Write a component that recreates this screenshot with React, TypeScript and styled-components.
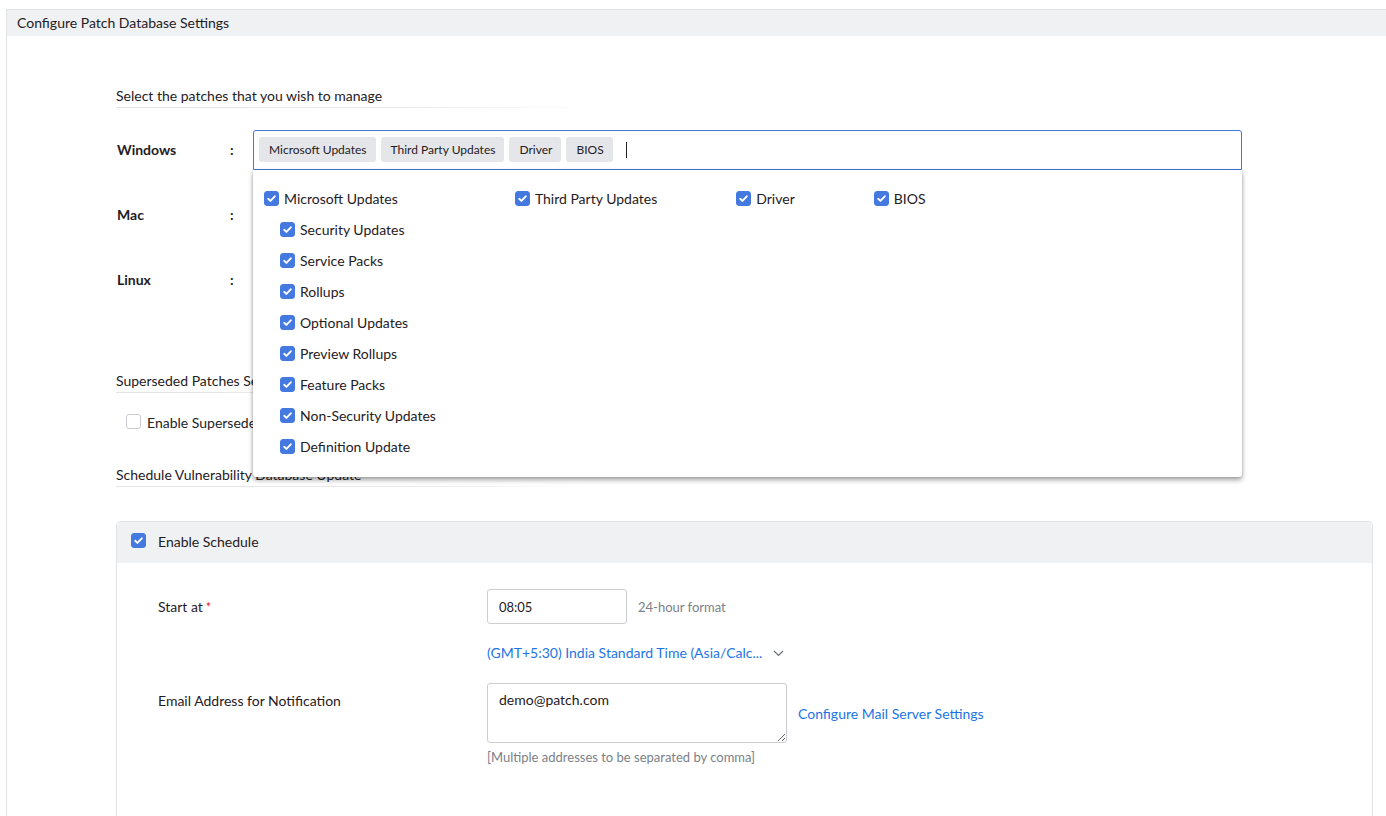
import React from "react";
import styled, { createGlobalStyle } from "styled-components";

const GlobalStyle = createGlobalStyle`
  html, body {
    margin: 0;
    padding: 0;
    background: #ffffff;
    font-family: Lato, "Open Sans", "Liberation Sans", sans-serif;
    color: #222326;
  }
  * { box-sizing: border-box; }
`;

// Outer frame
const Page = styled.div`
  padding: 9px 0 0 6px;
  min-height: 100vh;
`;

const Frame = styled.div`
  border-top: 1px solid #e2e3e7;
  border-left: 1px solid #e2e3e7;
  min-height: calc(100vh - 9px);
`;

const FrameHeader = styled.div`
  height: 26px;
  line-height: 26px;
  padding-left: 10px;
  background: #f0f1f3;
  font-size: 14px;
  color: #1f2024;
`;

const Content = styled.div`
  padding: 0 13px 0 109px;
`;

// Section titles with fading rule
const SectionTitle = styled.div<{ $top: number }>`
  margin-top: ${(p) => p.$top}px;
  font-size: 14px;
  line-height: 20px;
  width: 480px;
  color: #1f2024;
  background-image: linear-gradient(to right, #e3e4e8 0%, #e8e9ec 60%, rgba(255, 255, 255, 0) 100%);
  background-size: 100% 1px;
  background-position: bottom left;
  background-repeat: no-repeat;
  padding-bottom: 2px;
`;

// OS rows
const OsList = styled.div`
  margin-top: 22px;
  display: flex;
  flex-direction: column;
  gap: 25px;
`;

const OsRow = styled.div`
  display: flex;
  align-items: center;
`;

const OsLabel = styled.div`
  width: 114px;
  padding-left: 1px;
  font-size: 14px;
  font-weight: 700;
  color: #1f2024;
  margin-top: -2px;
`;

const Colon = styled.div`
  width: 23px;
  font-size: 14px;
  font-weight: 700;
  margin-top: -2px;
`;

const Field = styled.div`
  position: relative;
  width: 989px;
`;

const TagInput = styled.div<{ $active?: boolean }>`
  height: 40px;
  border: 1px solid ${(p) => (p.$active ? "#3f78de" : "#d3d5da")};
  border-radius: 3px 3px 0 0;
  display: flex;
  align-items: center;
  gap: 5px;
  padding: 0 5px 1px;
  background: #fff;
`;

const Chip = styled.span`
  height: 25px;
  line-height: 25px;
  padding: 0 9px 0 10px;
  border-radius: 3px;
  background: #e5e6ea;
  font-size: 12px;
  color: #1f2024;
`;

const Caret = styled.span`
  width: 1px;
  height: 16px;
  margin-left: 8px;
  background: #222;
`;

// Dropdown menu overlaying the form
const Menu = styled.div`
  position: absolute;
  top: 100%;
  left: 0;
  right: 0;
  z-index: 5;
  background: #fff;
  padding: 13px 11px 15px;
  display: flex;
  gap: 79px;
  box-shadow: 0 3px 5px rgba(0, 0, 0, 0.36), 0 0 2px rgba(0, 0, 0, 0.22);
  border-radius: 0 0 3px 3px;
`;

const MenuColumn = styled.div`
  display: flex;
  flex-direction: column;
`;

const MenuItem = styled.label<{ $sub?: boolean }>`
  display: flex;
  align-items: center;
  gap: 5px;
  height: 31px;
  padding-left: ${(p) => (p.$sub ? 16 : 0)}px;
  font-size: 14px;
  color: #1f2024;
  white-space: nowrap;
`;

const Box = styled.span<{ $on: boolean }>`
  width: 15px;
  height: 15px;
  flex: none;
  border-radius: 3px;
  margin-top: -1px;
  background: ${(p) => (p.$on ? "#4479e0" : "#fff")};
  border: 1px solid ${(p) => (p.$on ? "#4479e0" : "#c9cbd1")};
  display: flex;
  align-items: center;
  justify-content: center;
`;

const CheckRow = styled.div`
  margin-top: 19px;
  padding-left: 10px;
  display: flex;
  align-items: center;
  gap: 6px;
  height: 20px;
  font-size: 14px;
`;

// Schedule panel
const Panel = styled.div`
  margin-top: 34px;
  border: 1px solid #e2e3e7;
  border-bottom: none;
  border-radius: 5px 5px 0 0;
`;

const PanelHeader = styled.div`
  height: 41px;
  background: #f0f1f3;
  border-radius: 5px 5px 0 0;
  display: flex;
  align-items: center;
  gap: 12px;
  padding: 0 0 3px 14px;
  font-size: 14px;
  color: #1f2024;
`;

const PanelBody = styled.div`
  padding: 26px 0 80px 41px;
  display: flex;
  flex-direction: column;
`;

const FormRow = styled.div<{ $gap: number }>`
  display: flex;
  margin-top: ${(p) => p.$gap}px;
`;

const FormLabel = styled.div`
  width: 329px;
  padding-top: 8px;
  font-size: 14px;
  line-height: 20px;
  color: #1f2024;
`;

const Required = styled.span`
  color: #e0262b;
  margin-left: 3px;
  vertical-align: top;
  font-size: 13px;
`;

const FormValue = styled.div`
  display: flex;
  flex-direction: column;
`;

const Inline = styled.div`
  display: flex;
  align-items: center;
  gap: 11px;
`;

const TimeInput = styled.input`
  width: 140px;
  height: 35px;
  border: 1px solid #ccced4;
  border-radius: 3px;
  padding: 0 11px;
  font-family: inherit;
  font-size: 13px;
  color: #1f2024;
  outline: none;
`;

const Hint = styled.span<{ $top?: number }>`
  font-size: 13px;
  color: #7b7f89;
  line-height: 18px;
  margin-top: ${(p) => p.$top ?? 0}px;
`;

const Link = styled.a<{ $drop?: number }>`
  font-size: 14px;
  color: #1d74e6;
  text-decoration: none;
  line-height: 20px;
  cursor: pointer;
  margin-top: ${(p) => p.$drop ?? 0}px;
`;

const ZoneRow = styled.div`
  display: flex;
  align-items: center;
  gap: 11px;
  margin-top: 19px;
  height: 20px;
`;

const MailArea = styled.textarea`
  width: 300px;
  height: 60px;
  border: 1px solid #ccced4;
  border-radius: 3px;
  padding: 7px 11px;
  font-family: inherit;
  font-size: 14px;
  color: #1f2024;
  outline: none;
  resize: both;
`;

function Check({ on }: { on: boolean }) {
  return (
    <Box $on={on}>
      {on && (
        <svg width="11" height="11" viewBox="0 0 11 11">
          <path d="M2.2 5.8 L4.4 7.9 L8.8 3.3" fill="none" stroke="#fff" strokeWidth="1.9" strokeLinecap="round" strokeLinejoin="round" />
        </svg>
      )}
    </Box>
  );
}

const microsoftSubs = [
  "Security Updates",
  "Service Packs",
  "Rollups",
  "Optional Updates",
  "Preview Rollups",
  "Feature Packs",
  "Non-Security Updates",
  "Definition Update",
];

const chips = ["Microsoft Updates", "Third Party Updates", "Driver", "BIOS"];

export default function App() {
  return (
    <>
      <GlobalStyle />
      <Page>
        <Frame>
          <FrameHeader>Configure Patch Database Settings</FrameHeader>
          <Content>
            <SectionTitle $top={50}>Select the patches that you wish to manage</SectionTitle>

            <OsList>
              <OsRow>
                <OsLabel>Windows</OsLabel>
                <Colon>:</Colon>
                <Field>
                  <TagInput $active>
                    {chips.map((c) => (
                      <Chip key={c}>{c}</Chip>
                    ))}
                    <Caret />
                  </TagInput>
                  <Menu>
                    <MenuColumn>
                      <MenuItem>
                        <Check on />
                        Microsoft Updates
                      </MenuItem>
                      {microsoftSubs.map((s) => (
                        <MenuItem key={s} $sub>
                          <Check on />
                          {s}
                        </MenuItem>
                      ))}
                    </MenuColumn>
                    <MenuColumn>
                      <MenuItem>
                        <Check on />
                        Third Party Updates
                      </MenuItem>
                    </MenuColumn>
                    <MenuColumn>
                      <MenuItem>
                        <Check on />
                        Driver
                      </MenuItem>
                    </MenuColumn>
                    <MenuColumn>
                      <MenuItem>
                        <Check on />
                        BIOS
                      </MenuItem>
                    </MenuColumn>
                  </Menu>
                </Field>
              </OsRow>
              <OsRow>
                <OsLabel>Mac</OsLabel>
                <Colon>:</Colon>
                <Field>
                  <TagInput />
                </Field>
              </OsRow>
              <OsRow>
                <OsLabel>Linux</OsLabel>
                <Colon>:</Colon>
                <Field>
                  <TagInput />
                </Field>
              </OsRow>
            </OsList>

            <SectionTitle $top={71}>Superseded Patches Settings</SectionTitle>
            <CheckRow>
              <Check on={false} />
              Enable Superseded Patches Cleanup
            </CheckRow>

            <SectionTitle $top={33}>Schedule Vulnerability Database Update</SectionTitle>

            <Panel>
              <PanelHeader>
                <Check on />
                Enable Schedule
              </PanelHeader>
              <PanelBody>
                <FormRow $gap={0}>
                  <FormLabel>
                    Start at<Required>*</Required>
                  </FormLabel>
                  <FormValue>
                    <Inline>
                      <TimeInput defaultValue="08:05" readOnly />
                      <Hint>24-hour format</Hint>
                    </Inline>
                    <ZoneRow>
                      <Link>(GMT+5:30) India Standard Time (Asia/Calc...</Link>
                      <svg width="11" height="7" viewBox="0 0 11 7">
                        <path d="M1 1 L5.5 5.5 L10 1" fill="none" stroke="#6b6f78" strokeWidth="1.2" />
                      </svg>
                    </ZoneRow>
                  </FormValue>
                </FormRow>
                <FormRow $gap={20}>
                  <FormLabel>Email Address for Notification</FormLabel>
                  <FormValue>
                    <Inline>
                      <MailArea defaultValue="demo@patch.com" readOnly />
                      <Link $drop={2}>Configure Mail Server Settings</Link>
                    </Inline>
                    <Hint $top={5}>[Multiple addresses to be separated by comma]</Hint>
                  </FormValue>
                </FormRow>
              </PanelBody>
            </Panel>
          </Content>
        </Frame>
      </Page>
    </>
  );
}
